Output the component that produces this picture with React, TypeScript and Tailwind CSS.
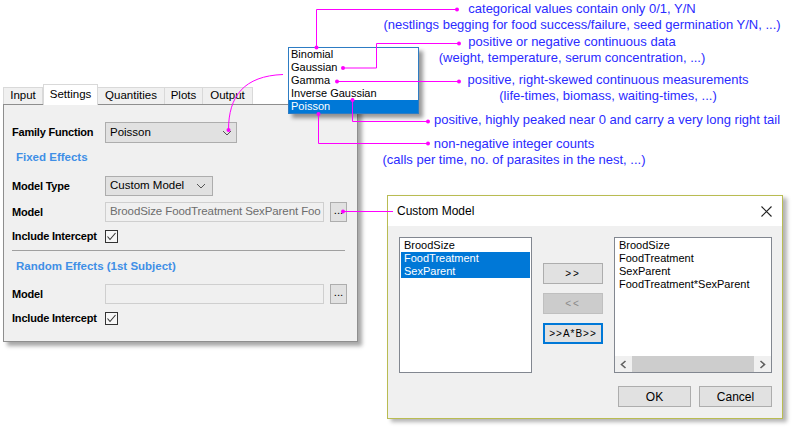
const ui = "font-['Liberation_Sans',Arial,sans-serif]";

const families = ["Binomial", "Gaussian", "Gamma", "Inverse Gaussian", "Poisson"];

const notes = [
  { x: 582, top: 1, lines: ["categorical values contain only 0/1, Y/N", "(nestlings begging for food success/failure, seed germination Y/N, ...)"] },
  { x: 572, top: 34, lines: ["positive or negative continuous data", "(weight, temperature, serum concentration, ...)"] },
  { x: 608, top: 72, lines: ["positive, right-skewed continuous measurements", "(life-times, biomass, waiting-times, ...)"] },
  { x: 607, top: 112, lines: ["positive, highly peaked near 0 and carry a very long right tail"] },
  { x: 514, top: 136, lines: ["non-negative integer counts", "(calls per time, no. of parasites in the nest, ...)"] },
];

function Chevron() {
  return (
    <svg width="10" height="6" viewBox="0 0 10 6">
      <polyline points="1,1 5,5 9,1" fill="none" stroke="#555" strokeWidth="1" />
    </svg>
  );
}

function Check() {
  return (
    <span className="flex h-[13px] w-[13px] items-center justify-center border border-[#333] bg-[#f7f7f7]">
      <svg width="11" height="11" viewBox="0 0 11 11">
        <polyline points="1.5,5.5 4,8.5 9.5,2" fill="none" stroke="#333" strokeWidth="1.1" />
      </svg>
    </span>
  );
}

function Tab({ label, active, w }: { label: string; active?: boolean; w: string }) {
  return active ? (
    <div className={`relative z-10 -mb-px flex h-[21px] items-center justify-center border border-b-0 border-[#d9d9d9] bg-white ${w}`}>{label}</div>
  ) : (
    <div className={`flex h-[17px] items-center justify-center border border-b-0 border-l-0 border-[#d9d9d9] bg-[#f0f0f0] first:border-l ${w}`}>{label}</div>
  );
}

function Row({ label, children, cls }: { label: string; children: React.ReactNode; cls: string }) {
  return (
    <div className={`flex items-center ${cls}`}>
      <span className="w-[93px] shrink-0 whitespace-nowrap text-[11px] font-bold tracking-[-0.2px]">{label}</span>
      {children}
    </div>
  );
}

function ModelInput({ value }: { value?: string }) {
  return (
    <div className="flex h-[20px] items-center gap-[6px]">
      <div className="flex h-full w-[219px] items-center overflow-hidden whitespace-nowrap border border-[#cfcfcf] bg-[#f0f0f0] pl-[4px] tracking-[-0.1px] text-[#6d6d6d]">
        {value}
      </div>
      <div className="flex h-full w-[17px] items-center justify-center border border-[#adadad] bg-[#e1e1e1] pb-[3px] leading-none">...</div>
    </div>
  );
}

function SettingsWindow() {
  return (
    <div className={`absolute left-[3px] top-[84px] w-[355px] text-[11.5px] text-black ${ui}`}>
      <div className="flex h-[20px] items-end">
        <Tab label="Input" w="w-[40px]" />
        <Tab label="Settings" active w="w-[55px]" />
        <Tab label="Quantities" w="w-[67px]" />
        <Tab label="Plots" w="w-[38px]" />
        <Tab label="Output" w="w-[50px]" />
      </div>
      <div className="flex h-[238px] flex-col border border-[#8e8e8e] bg-[#f0f0f0] pl-[8px] pt-[17px] shadow-[4px_4px_4px_rgba(0,0,0,0.35)]">
        <Row label="Family Function" cls="h-[21px]">
          <div className="flex h-full w-[132px] items-center justify-between border border-[#adadad] bg-[#e1e1e1] pl-[4px] pr-[4px]">
            Poisson <Chevron />
          </div>
        </Row>
        <div className="mt-[7px] flex h-[16px] items-center pl-[4px] font-bold text-[#3f8fe6]">Fixed Effects</div>
        <Row label="Model Type" cls="mt-[10px] h-[20px]">
          <div className="flex h-full w-[108px] items-center justify-between border border-[#adadad] bg-[#e1e1e1] pl-[4px] pr-[6px]">
            Custom Model <Chevron />
          </div>
        </Row>
        <Row label="Model" cls="mt-[6px] h-[20px]">
          <ModelInput value="BroodSize FoodTreatment SexParent Foo" />
        </Row>
        <Row label="Include Intercept" cls="mt-[7px] h-[14px]">
          <Check />
        </Row>
        <div className="mt-[7px] h-px w-[333px] bg-[#a0a0a0]" />
        <div className="mt-[8px] flex h-[16px] items-center pl-[4px] font-bold text-[#3f8fe6]">Random Effects (1st Subject)</div>
        <Row label="Model" cls="mt-[9px] h-[20px]">
          <ModelInput />
        </Row>
        <Row label="Include Intercept" cls="mt-[7px] h-[14px]">
          <Check />
        </Row>
      </div>
    </div>
  );
}

function FamilyList() {
  return (
    <div className={`absolute left-[288px] top-[47px] flex w-[131px] flex-col border border-[#2d7cc4] bg-white text-[11px] shadow-[4px_4px_4px_rgba(0,0,0,0.4)] ${ui}`}>
      {families.map((f) => (
        <div key={f} className={`flex h-[13px] items-center pl-[2px] ${f === "Poisson" ? "bg-[#0078d7] text-white" : "text-black"}`}>
          {f}
        </div>
      ))}
    </div>
  );
}

function ListBox({ items, selected, scroll }: { items: string[]; selected?: string[]; scroll?: boolean }) {
  return (
    <div className="flex h-[136px] flex-col border border-[#828790] bg-white text-[11px]">
      <div className="flex flex-1 flex-col px-px pt-px">
        {items.map((i) => (
          <div key={i} className={`flex h-[13px] items-center pl-[3px] ${selected?.includes(i) ? "bg-[#0078d7] text-white" : ""}`}>
            {i}
          </div>
        ))}
      </div>
      {scroll && (
        <div className="flex h-[16px] items-center bg-[#f0f0f0]">
          <svg className="mx-[5px]" width="7" height="9" viewBox="0 0 7 9">
            <polyline points="5.5,1 1.5,4.5 5.5,8" fill="none" stroke="#606060" strokeWidth="1.6" />
          </svg>
          <div className="h-full flex-1 bg-[#cdcdcd]" />
          <svg className="mx-[5px]" width="7" height="9" viewBox="0 0 7 9">
            <polyline points="1.5,1 5.5,4.5 1.5,8" fill="none" stroke="#606060" strokeWidth="1.6" />
          </svg>
        </div>
      )}
    </div>
  );
}

function CustomModelDialog() {
  return (
    <div className={`absolute left-[387px] top-[195px] h-[224px] w-[396px] border border-[#b9bc52] bg-[#f0f0f0] text-[12px] text-black shadow-[4px_3px_4px_rgba(0,0,0,0.3)] ${ui}`}>
      <div className="flex h-[30px] items-center justify-between bg-white pl-[9px] pr-[10px]">
        Custom Model
        <svg width="11" height="11" viewBox="0 0 11 11">
          <path d="M0.5 0.5 L10.5 10.5 M10.5 0.5 L0.5 10.5" stroke="#222" strokeWidth="1.1" />
        </svg>
      </div>
      <div className="flex gap-[11px] pl-[11px] pt-[11px]">
        <div className="w-[133px]">
          <ListBox items={["BroodSize", "FoodTreatment", "SexParent"]} selected={["FoodTreatment", "SexParent"]} />
        </div>
        <div className="flex w-[60px] flex-col gap-[9px] pt-[26px] text-[10px]">
          <div className="flex h-[21px] items-center justify-center border border-[#adadad] bg-[#e1e1e1] tracking-[2px]">&gt;&gt;</div>
          <div className="flex h-[21px] items-center justify-center border border-[#bfbfbf] bg-[#cccccc] tracking-[2px] text-[#8a8a8a]">&lt;&lt;</div>
          <div className="flex h-[21px] items-center justify-center border-2 border-[#0078d7] bg-[#e1e1e1] tracking-[1px]">&gt;&gt;A*B&gt;&gt;</div>
        </div>
        <div className="w-[158px]">
          <ListBox items={["BroodSize", "FoodTreatment", "SexParent", "FoodTreatment*SexParent"]} scroll />
        </div>
      </div>
      <div className="mt-[13px] flex justify-end gap-[8px] pr-[10px]">
        <div className="flex h-[21px] w-[73px] items-center justify-center border border-[#adadad] bg-[#e1e1e1]">OK</div>
        <div className="flex h-[21px] w-[73px] items-center justify-center border border-[#adadad] bg-[#e1e1e1]">Cancel</div>
      </div>
    </div>
  );
}

function Callouts() {
  const dots: [number, number][] = [
    [316.5, 47.5], [457, 9.5], [343, 68], [459, 43.5], [337, 81.5], [459, 81.5],
    [352.5, 100], [428, 121.5], [318.5, 114], [428, 143.5], [228.5, 130], [343, 211.5],
  ];
  return (
    <svg className="pointer-events-none absolute left-0 top-0" width="794" height="428" viewBox="0 0 794 428">
      <g fill="none" stroke="#ff00ff" strokeWidth="1">
        <path d="M316.5 47.5 V9.5 H457" />
        <path d="M343 68 H376.5 V43.5 H459" />
        <path d="M337 81.5 H459" />
        <path d="M352.5 100 V121.5 H428" />
        <path d="M318.5 114 V143.5 H428" />
        <path d="M283 74.5 C244 76 228.5 96 228.5 130" />
        <path d="M343 211.5 H393" />
      </g>
      {dots.map(([x, y], i) => (
        <circle key={i} cx={x} cy={y} r="2" fill="#ff00ff" />
      ))}
    </svg>
  );
}

export default function App() {
  return (
    <div className="relative h-[428px] w-[794px] overflow-hidden bg-white">
      <SettingsWindow />
      <CustomModelDialog />
      <FamilyList />
      {notes.map((n) => (
        <div
          key={n.top}
          className={`absolute -translate-x-1/2 whitespace-nowrap text-center text-[13px] leading-[16px] text-[#2b2bff] ${ui}`}
          style={{ left: n.x, top: n.top }}
        >
          {n.lines.map((l) => (
            <div key={l}>{l}</div>
          ))}
        </div>
      ))}
      <Callouts />
    </div>
  );
}
